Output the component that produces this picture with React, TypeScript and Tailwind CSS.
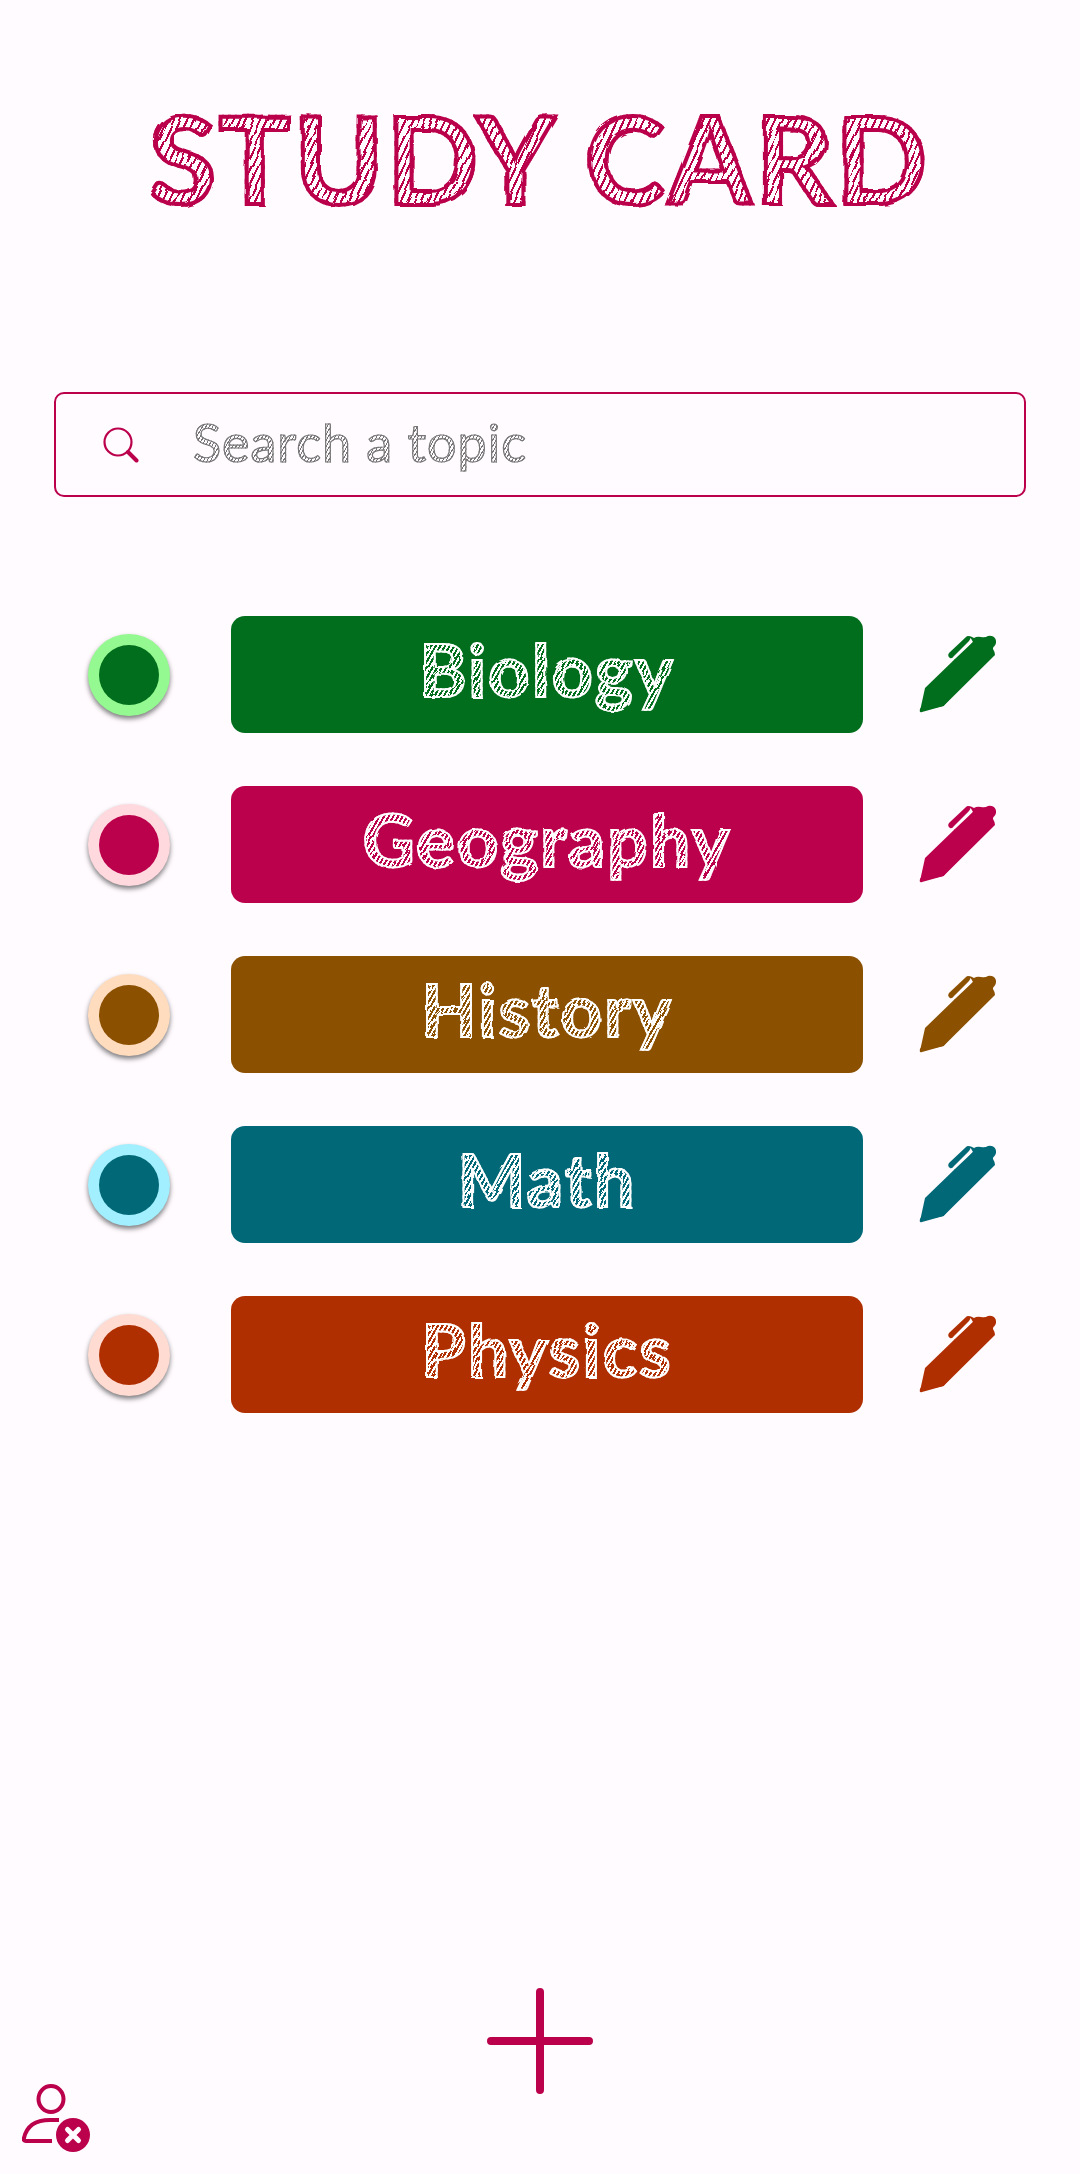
import React from "react";

const topics = [
  { name: "Biology", main: "#006e1c", light: "#94f990" },
  { name: "Geography", main: "#bb004c", light: "#ffd9de" },
  { name: "History", main: "#8b5000", light: "#ffdcbe" },
  { name: "Math", main: "#006876", light: "#a1efff" },
  { name: "Physics", main: "#b02f00", light: "#ffdbd1" },
];

function Pen({ color }: { color: string }) {
  return (
    <svg width="78" height="79" viewBox="0 0 78 79" className="shrink-0" fill={color}>
      <path d="M1 74 Q0 78 3 77 L24.5 71 L76 20 Q76 17 74.5 15 Q73 13 75.5 11 Q78 8 76.5 4 Q74 0 69 1 Q66 3 62 2 Q58 1 55 3 Q52 1 49 1 Q52 3 54 7 L37 25 L36 24 Z M36 24 L6 53 Z" />
      <path d="M6 53 L37 23 L54 7 L60 30 L24.5 71 L1 76 Z" />
      <path d="M47 2 Q49 0 51 2 Q52 4 50 6 L35 21 Q33 24 31 23 Q28 21 30 18 Z" />
    </svg>
  );
}

function Row({ name, main, light }: { name: string; main: string; light: string }) {
  return (
    <div className="flex h-[117px] items-center">
      <div
        className="flex h-[82px] w-[82px] shrink-0 items-center justify-center rounded-full shadow-[0_3px_5px_rgba(0,0,0,0.5)]"
        style={{ backgroundColor: light }}
      >
        <div className="h-[60px] w-[60px] rounded-full" style={{ backgroundColor: main }} />
      </div>
      <div
        className="ml-[61px] flex h-[117px] w-[632px] shrink-0 items-center justify-center rounded-[14px]"
        style={{ backgroundColor: main }}
      >
        <span className="bg-[repeating-linear-gradient(120deg,#ffffff_0_2px,transparent_2px_4px)] bg-clip-text pb-3 font-['Lato',sans-serif] text-[72px] leading-[80px] font-bold tracking-[2px] text-transparent [-webkit-text-stroke:2px_#ffffff] [filter:url(#rough-small)]">
          {name}
        </span>
      </div>
      <div className="ml-[56px] flex">
        <Pen color={main} />
      </div>
    </div>
  );
}

export default function App() {
  return (
    <div className="flex h-[2174px] w-[1080px] flex-col overflow-hidden bg-[#fffbff] font-['Lato',sans-serif]">
      <svg width="0" height="0" className="absolute">
        <filter id="rough" x="-5%" y="-5%" width="110%" height="110%">
          <feTurbulence type="fractalNoise" baseFrequency="0.05" numOctaves="2" seed="4" />
          <feDisplacementMap in="SourceGraphic" scale="5" />
        </filter>
        <filter id="rough-small" x="-5%" y="-5%" width="110%" height="110%">
          <feTurbulence type="fractalNoise" baseFrequency="0.08" numOctaves="2" seed="7" />
          <feDisplacementMap in="SourceGraphic" scale="3" />
        </filter>
      </svg>

      <h1 className="mt-[93px] bg-[repeating-linear-gradient(115deg,#bb004c_0_2px,transparent_2px_6px)] bg-clip-text text-center text-[120px] leading-[130px] font-bold tracking-[3.5px] text-transparent [-webkit-text-stroke:4px_#bb004c] [filter:url(#rough)]">
        STUDY CARD
      </h1>

      <div className="mx-[54px] mt-[169px] flex h-[105px] items-center rounded-[10px] border-2 border-[#bb004c]">
        <svg width="36" height="36" viewBox="0 0 36 36" className="ml-[47px] shrink-0" fill="none" stroke="#bb004c">
          <circle cx="15" cy="15" r="13.5" strokeWidth="2.2" />
          <path d="M25 25 L33.5 33.5" strokeWidth="4" strokeLinecap="round" />
        </svg>
        <span className="mb-[6px] ml-[54px] bg-[repeating-linear-gradient(120deg,#777777_0_1px,transparent_1px_3px)] bg-clip-text text-[52px] leading-[60px] tracking-[1px] text-transparent [-webkit-text-stroke:1.2px_#777777]">
          Search a topic
        </span>
      </div>

      <div className="mt-[119px] flex flex-col gap-[53px] pl-[88px]">
        {topics.map((t) => (
          <Row key={t.name} {...t} />
        ))}
      </div>

      <div className="mt-auto flex justify-center">
        <svg width="106" height="106" viewBox="0 0 106 106" stroke="#bb004c" strokeWidth="8" strokeLinecap="round">
          <path d="M53 4 V102 M4 53 H102" />
        </svg>
      </div>

      <div className="mt-[-11px] mb-[19px] ml-[22px] flex">
        <svg width="70" height="72" viewBox="0 0 70 72">
          <ellipse cx="29" cy="16" rx="12.5" ry="13" fill="none" stroke="#bb004c" strokeWidth="4" />
          <path d="M37 37 H28 Q6 37 2 55 Q1 58 4 58 H30" fill="none" stroke="#bb004c" strokeWidth="4" />
          <circle cx="51" cy="52" r="17" fill="#bb004c" />
          <path d="M45.5 46.5 L56.5 57.5 M56.5 46.5 L45.5 57.5" stroke="#fffbff" strokeWidth="5" strokeLinecap="round" />
        </svg>
      </div>
    </div>
  );
}
